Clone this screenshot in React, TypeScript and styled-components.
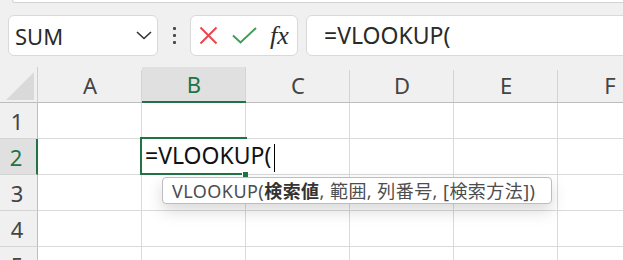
import React from "react";
import styled, { createGlobalStyle, css } from "styled-components";

const GREEN = "#217346";
const UI_FONT = `"Noto Sans", "Noto Sans CJK JP", sans-serif`;

const GlobalStyle = createGlobalStyle`
  html, body { margin: 0; padding: 0; }
  body {
    background: #f0f0f0;
    font-family: ${UI_FONT};
    overflow: hidden;
  }
`;

const Page = styled.div`
  width: 623px;
  height: 260px;
  overflow: hidden;
  background: #f0f0f0;
`;

const TopStub = styled.div`
  height: 2px;
  margin-left: 12px;
  margin-right: -12px;
  background: #fff;
  border: 1px solid #d2d2d2;
  border-top: none;
  border-radius: 0 0 0 6px;
`;

const Toolbar = styled.div`
  display: flex;
  align-items: center;
  height: 41px;
  margin-top: 12px;
  padding-left: 8px;
`;

const Box = styled.div`
  box-sizing: border-box;
  height: 41px;
  background: #fff;
  border: 1px solid #d9d9d9;
  border-radius: 6px;
  display: flex;
  align-items: center;
`;

const NameBox = styled(Box)`
  width: 150px;
  padding: 0 5px 0 6px;
  justify-content: space-between;
`;

const NameText = styled.span`
  font-size: 22px;
  color: #2a2a2a;
  line-height: 1;
  padding-top: 1px;
`;

const Grip = styled.div`
  width: 32px;
  display: flex;
  flex-direction: column;
  align-items: center;
  gap: 4px;
`;

const GripDot = styled.span`
  width: 3px;
  height: 3px;
  border-radius: 1px;
  background: #4a4a4a;
`;

const FxBox = styled(Box)`
  width: 108px;
  padding-left: 8px;
`;

const IconSlot = styled.span<{ $w: number }>`
  width: ${(p) => p.$w}px;
  display: flex;
  align-items: center;
`;

const FxText = styled.span`
  font-family: "Liberation Serif", "DejaVu Serif", serif;
  font-style: italic;
  font-size: 26px;
  color: #2b2b2b;
  line-height: 1;
  margin-left: 1px;
`;

const FormulaInput = styled(Box)`
  flex: 1;
  margin-left: 8px;
  margin-right: -14px;
  padding-left: 17px;
  border-radius: 6px 0 0 6px;
`;

const FormulaText = styled.span`
  font-size: 23px;
  color: #2a2a2a;
  line-height: 1;
`;

const Sheet = styled.div`
  margin-top: 11px;
  display: grid;
  grid-template-columns: 38px repeat(6, 104px);
  grid-template-rows: 36px repeat(5, 36px);
  background: #fff;
`;

const Corner = styled.div`
  box-sizing: border-box;
  background: #f0f0f0;
  border-right: 1px solid #cfcfcf;
  border-bottom: 1px solid #bdbdbd;
  display: flex;
  align-items: flex-end;
  justify-content: flex-end;
  padding: 0 3px 2px 0;
`;

const ColHeader = styled.div<{ $selected?: boolean }>`
  position: relative;
  box-sizing: border-box;
  display: flex;
  align-items: center;
  justify-content: center;
  font-size: 22px;
  line-height: 1;
  color: #444;
  background: #f0f0f0;
  border-bottom: 1px solid #bdbdbd;
  &::after {
    content: "";
    position: absolute;
    right: 0;
    top: 3px;
    bottom: 0;
    width: 1px;
    background: #d4d4d4;
  }
  ${(p) =>
    p.$selected &&
    css`
      background: #e0e0e0;
      color: ${GREEN};
      border-bottom: 2px solid ${GREEN};
      &::after {
        top: 0;
      }
    `}
`;

const RowHeader = styled.div<{ $selected?: boolean }>`
  box-sizing: border-box;
  display: flex;
  align-items: center;
  justify-content: center;
  padding-right: 3px;
  font-size: 22px;
  line-height: 1;
  color: #444;
  background: #f0f0f0;
  border-right: 1px solid #bdbdbd;
  border-bottom: 1px solid #d4d4d4;
  ${(p) =>
    p.$selected &&
    css`
      background: #e0e0e0;
      color: ${GREEN};
      border-right: 2px solid ${GREEN};
      padding-right: 4px;
    `}
`;

const Cell = styled.div<{ $active?: boolean }>`
  position: relative;
  box-sizing: border-box;
  border-right: 1px solid #dadada;
  border-bottom: 1px solid #dadada;
  ${(p) => p.$active && css`z-index: 2;`}
`;

const ActiveOutline = styled.div`
  position: absolute;
  left: -2px;
  top: -2px;
  right: -2px;
  bottom: -1px;
  border: 2px solid ${GREEN};
  pointer-events: none;
`;

const FillHandle = styled.div`
  position: absolute;
  right: -3px;
  bottom: -4px;
  width: 5px;
  height: 5px;
  background: ${GREEN};
  border: 1px solid #fff;
  border-right: none;
  border-bottom: none;
`;

const EditBox = styled.div`
  position: absolute;
  left: 0;
  top: 0;
  height: 33px;
  padding: 0 4px 0 3px;
  background: #fff;
  display: flex;
  align-items: center;
  z-index: 3;
`;

const EditText = styled.span`
  font-size: 23px;
  color: #111;
  line-height: 1;
  white-space: nowrap;
`;

const Caret = styled.span`
  width: 1px;
  height: 28px;
  background: #000;
  margin-left: 3px;
  margin-top: 4px;
`;

const Tooltip = styled.div`
  position: absolute;
  left: 20px;
  top: 38px;
  box-sizing: border-box;
  height: 27px;
  width: 390px;
  padding: 0 0 0 9px;
  display: flex;
  align-items: center;
  background: #fff;
  border: 1px solid #bdbdbd;
  border-radius: 4px;
  box-shadow: 0 7px 16px rgba(0, 0, 0, 0.15);
  font-family: "Noto Sans", "Noto Sans CJK JP", sans-serif;
  font-size: 18px;
  letter-spacing: 0.45px;
  color: #4d4d4d;
  white-space: nowrap;
  z-index: 4;
  line-height: 1;
`;

const Strong = styled.b`
  font-weight: 700;
  color: #333;
`;

const XIcon = () => (
  <svg width="19" height="19" viewBox="0 0 19 19">
    <path d="M1.5 1.5 L17.5 17.5 M17.5 1.5 L1.5 17.5" stroke="#e8474c" strokeWidth="2" fill="none" />
  </svg>
);

const CheckIcon = () => (
  <svg width="25" height="17" viewBox="0 0 25 17">
    <path d="M1 8.5 L8.5 15.5 L24 1" stroke="#3c9f52" strokeWidth="2" fill="none" />
  </svg>
);

const Chevron = () => (
  <svg width="16" height="9" viewBox="0 0 16 9">
    <path d="M1 1 L8 7.5 L15 1" stroke="#333" strokeWidth="1.6" fill="none" />
  </svg>
);

const CornerTriangle = () => (
  <svg width="28" height="28" viewBox="0 0 28 28">
    <path d="M0 28 L28 28 L28 0 Z" fill="#d9d9d9" />
  </svg>
);

const columns = ["A", "B", "C", "D", "E", "F"];
const rows = [1, 2, 3, 4, 5];

export default function App() {
  return (
    <Page>
      <GlobalStyle />
      <TopStub />
      <Toolbar>
        <NameBox>
          <NameText>SUM</NameText>
          <Chevron />
        </NameBox>
        <Grip>
          <GripDot />
          <GripDot />
          <GripDot />
        </Grip>
        <FxBox>
          <IconSlot $w={33}>
            <XIcon />
          </IconSlot>
          <IconSlot $w={37}>
            <CheckIcon />
          </IconSlot>
          <FxText>fx</FxText>
        </FxBox>
        <FormulaInput>
          <FormulaText>=VLOOKUP(</FormulaText>
        </FormulaInput>
      </Toolbar>
      <Sheet>
        <Corner>
          <CornerTriangle />
        </Corner>
        {columns.map((c) => (
          <ColHeader key={c} $selected={c === "B"}>
            {c}
          </ColHeader>
        ))}
        {rows.map((r) => (
          <React.Fragment key={r}>
            <RowHeader $selected={r === 2}>{r}</RowHeader>
            {columns.map((c) => {
              const active = r === 2 && c === "B";
              return (
                <Cell key={c} $active={active}>
                  {active && (
                    <>
                      <ActiveOutline>
                        <FillHandle />
                      </ActiveOutline>
                      <EditBox>
                        <EditText>=VLOOKUP(</EditText>
                        <Caret />
                      </EditBox>
                      <Tooltip>
                        VLOOKUP(<Strong>検索値</Strong>, 範囲, 列番号, [検索方法])
                      </Tooltip>
                    </>
                  )}
                </Cell>
              );
            })}
          </React.Fragment>
        ))}
      </Sheet>
    </Page>
  );
}
